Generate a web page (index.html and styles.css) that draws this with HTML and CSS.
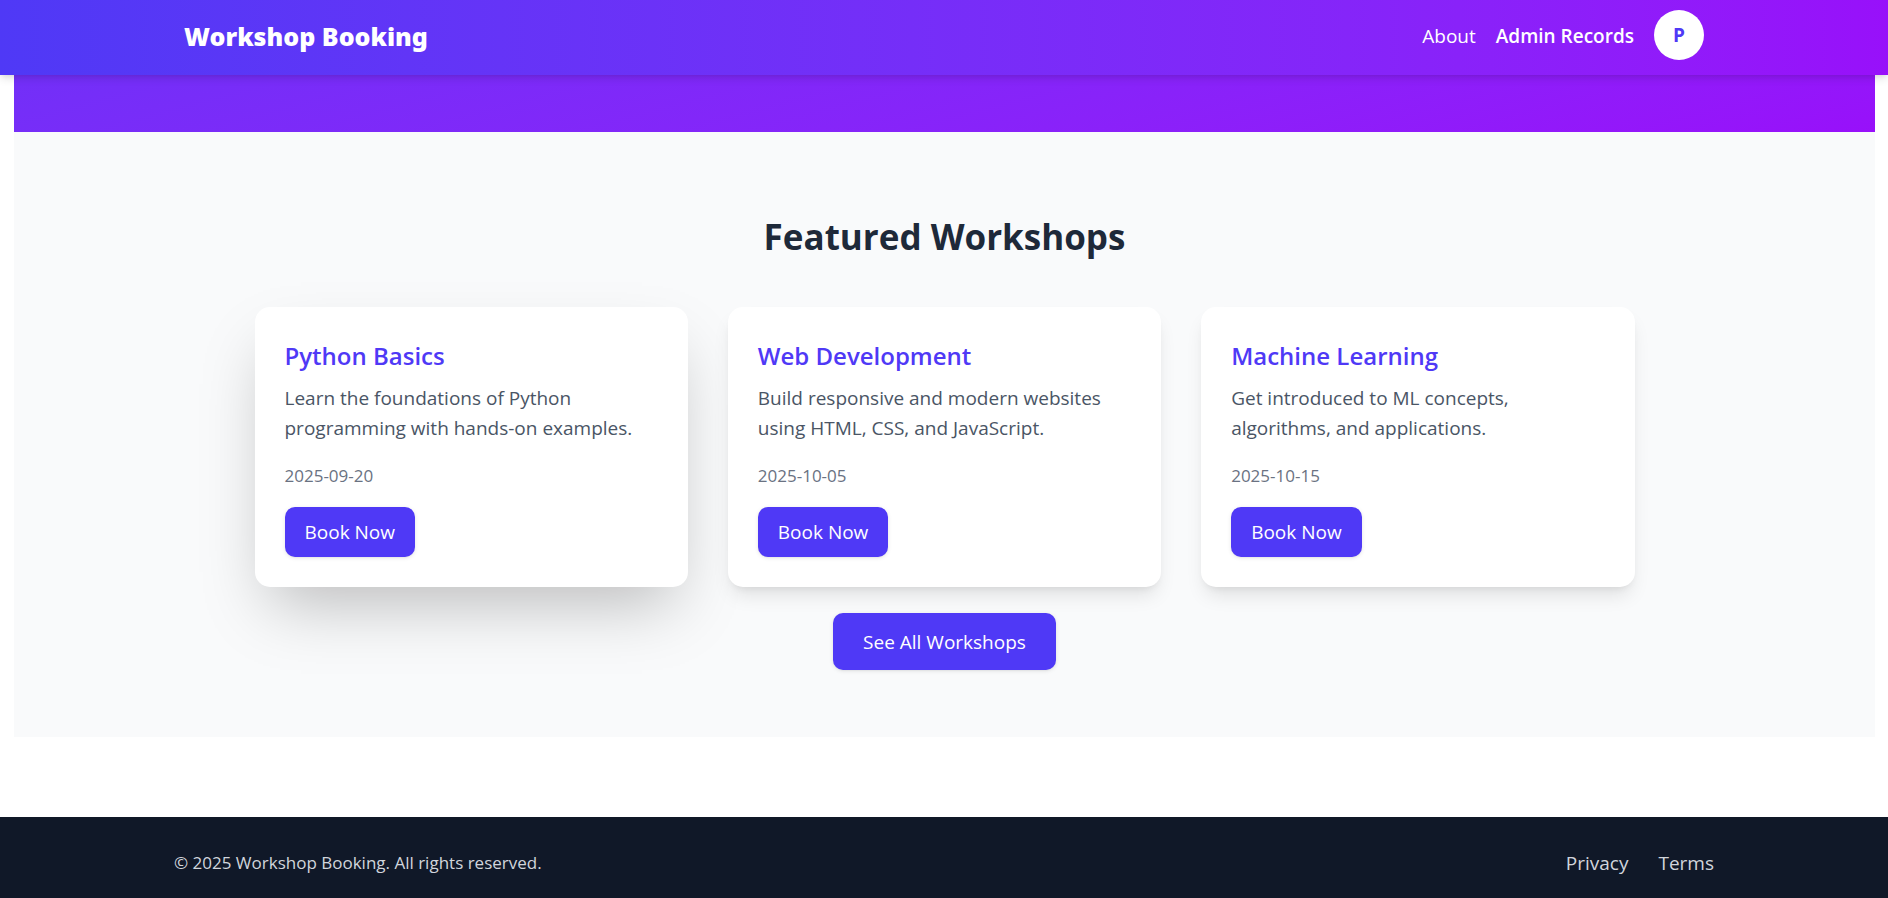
FILE: index.html
```html
<!DOCTYPE html>
<html lang="en">
<head>
<meta charset="utf-8">
<meta name="viewport" content="width=device-width, initial-scale=1">
<title>Workshop Booking</title>
<link rel="stylesheet" href="styles.css">
</head>
<body>
<header class="site-header">
  <div class="header-inner">
    <a class="brand" href="#">Workshop Booking</a>
    <nav class="main-nav">
      <a class="nav-link" href="#">About</a>
      <a class="nav-link nav-link-strong" href="#">Admin Records</a>
      <button class="avatar" type="button" aria-label="Profile menu">P</button>
    </nav>
  </div>
</header>
<main class="content">
  <div class="hero"></div>
  <section class="featured">
    <h2 class="featured-title">Featured Workshops</h2>
    <div class="card-grid">
      <article class="card card-raised">
        <h3 class="card-title">Python Basics</h3>
        <p class="card-text">Learn the foundations of Python programming with hands-on examples.</p>
        <p class="card-date">2025-09-20</p>
        <button class="button" type="button">Book Now</button>
      </article>
      <article class="card">
        <h3 class="card-title">Web Development</h3>
        <p class="card-text">Build responsive and modern websites using HTML, CSS, and JavaScript.</p>
        <p class="card-date">2025-10-05</p>
        <button class="button" type="button">Book Now</button>
      </article>
      <article class="card">
        <h3 class="card-title">Machine Learning</h3>
        <p class="card-text">Get introduced to ML concepts, algorithms, and applications.</p>
        <p class="card-date">2025-10-15</p>
        <button class="button" type="button">Book Now</button>
      </article>
    </div>
    <a class="button button-large" href="#">See All Workshops</a>
  </section>
</main>
<footer class="site-footer">
  <div class="footer-inner">
    <p class="copyright">© 2025 Workshop Booking. All rights reserved.</p>
    <nav class="footer-nav">
      <a class="footer-link" href="#">Privacy</a>
      <a class="footer-link" href="#">Terms</a>
    </nav>
  </div>
</footer>
</body>
</html>
```
FILE: styles.css
```css
*,
*::before,
*::after {
  box-sizing: border-box;
}

body {
  display: flex;
  flex-direction: column;
  min-height: 100vh;
  margin: 0;
  background: #fff;
  color: #1e2939;
  font-family: "Segoe UI", "Open Sans", "Noto Sans", sans-serif;
  font-size: 19px;
  line-height: 30px;
}

h2,
h3,
p {
  margin: 0;
}

a {
  color: inherit;
  text-decoration: none;
}

button {
  border: 0;
  font: inherit;
  cursor: pointer;
}

.site-header {
  position: sticky;
  top: 0;
  z-index: 10;
  padding: 10px 20px 15px;
  background: linear-gradient(to right in oklab, #4f39f6, #9810fa);
  box-shadow: 0 5px 8px -1px rgba(0, 0, 0, 0.1), 0 2px 5px -2px rgba(0, 0, 0, 0.1);
  color: #fff;
}

.header-inner {
  display: flex;
  align-items: center;
  justify-content: space-between;
  max-width: 1520px;
  margin: 0 auto;
}

.brand {
  padding-top: 2px;
  font-family: "Segoe UI Black", "Noto Sans", sans-serif;
  font-size: 25px;
  font-weight: 900;
}

.main-nav {
  display: flex;
  align-items: center;
  gap: 20px;
}

.nav-link {
  padding-top: 2px;
}

.nav-link-strong {
  font-weight: 600;
}

.avatar {
  width: 50px;
  height: 50px;
  padding: 0;
  border-radius: 50%;
  background: #fff;
  color: #4f39f6;
  font-weight: 700;
}

.content {
  margin: 0 13px 80px 14px;
}

.hero {
  height: 57px;
  background: linear-gradient(to bottom right in oklab, #4f39f6, #9810fa) bottom / 100% 500px no-repeat;
}

.featured {
  display: flex;
  flex-direction: column;
  align-items: center;
  padding: 82px 20px 67px;
  background: #f9fafb;
}

.featured-title {
  margin-bottom: 48px;
  font-size: 35px;
  font-weight: 700;
  line-height: 45px;
}

.card-grid {
  display: grid;
  grid-template-columns: repeat(3, 1fr);
  gap: 40px;
  width: 100%;
  max-width: 1380px;
  margin-bottom: 26px;
}

.card {
  padding: 31px 30px 30px;
  border-radius: 15px;
  background: #fff;
  box-shadow: 0 12px 19px -4px rgba(0, 0, 0, 0.1), 0 5px 8px -5px rgba(0, 0, 0, 0.1);
}

.card-raised {
  box-shadow: 0 31px 62px -15px rgba(0, 0, 0, 0.25);
}

.card-title {
  margin-bottom: 10px;
  color: #4f39f6;
  font-size: 24px;
  font-weight: 600;
  line-height: 35px;
}

.card-text {
  margin-bottom: 20px;
  color: #4a5565;
}

.card-date {
  margin-bottom: 19px;
  color: #6a7282;
  font-size: 17px;
  line-height: 25px;
}

.button {
  display: block;
  padding: 10px 20px;
  border-radius: 10px;
  background: #4f39f6;
  box-shadow: 0 1px 4px rgba(0, 0, 0, 0.1), 0 1px 2px -1px rgba(0, 0, 0, 0.1);
  color: #fff;
}

.button-large {
  padding: 14px 30px 13px;
}

.site-footer {
  flex: 1;
  padding: 31px 20px 20px;
  background: #101828;
  color: #d1d5dc;
}

.footer-inner {
  display: flex;
  align-items: center;
  justify-content: space-between;
  max-width: 1540px;
  margin: 0 auto;
}

.copyright {
  font-size: 17px;
}

.footer-nav {
  display: flex;
  gap: 30px;
}
```
